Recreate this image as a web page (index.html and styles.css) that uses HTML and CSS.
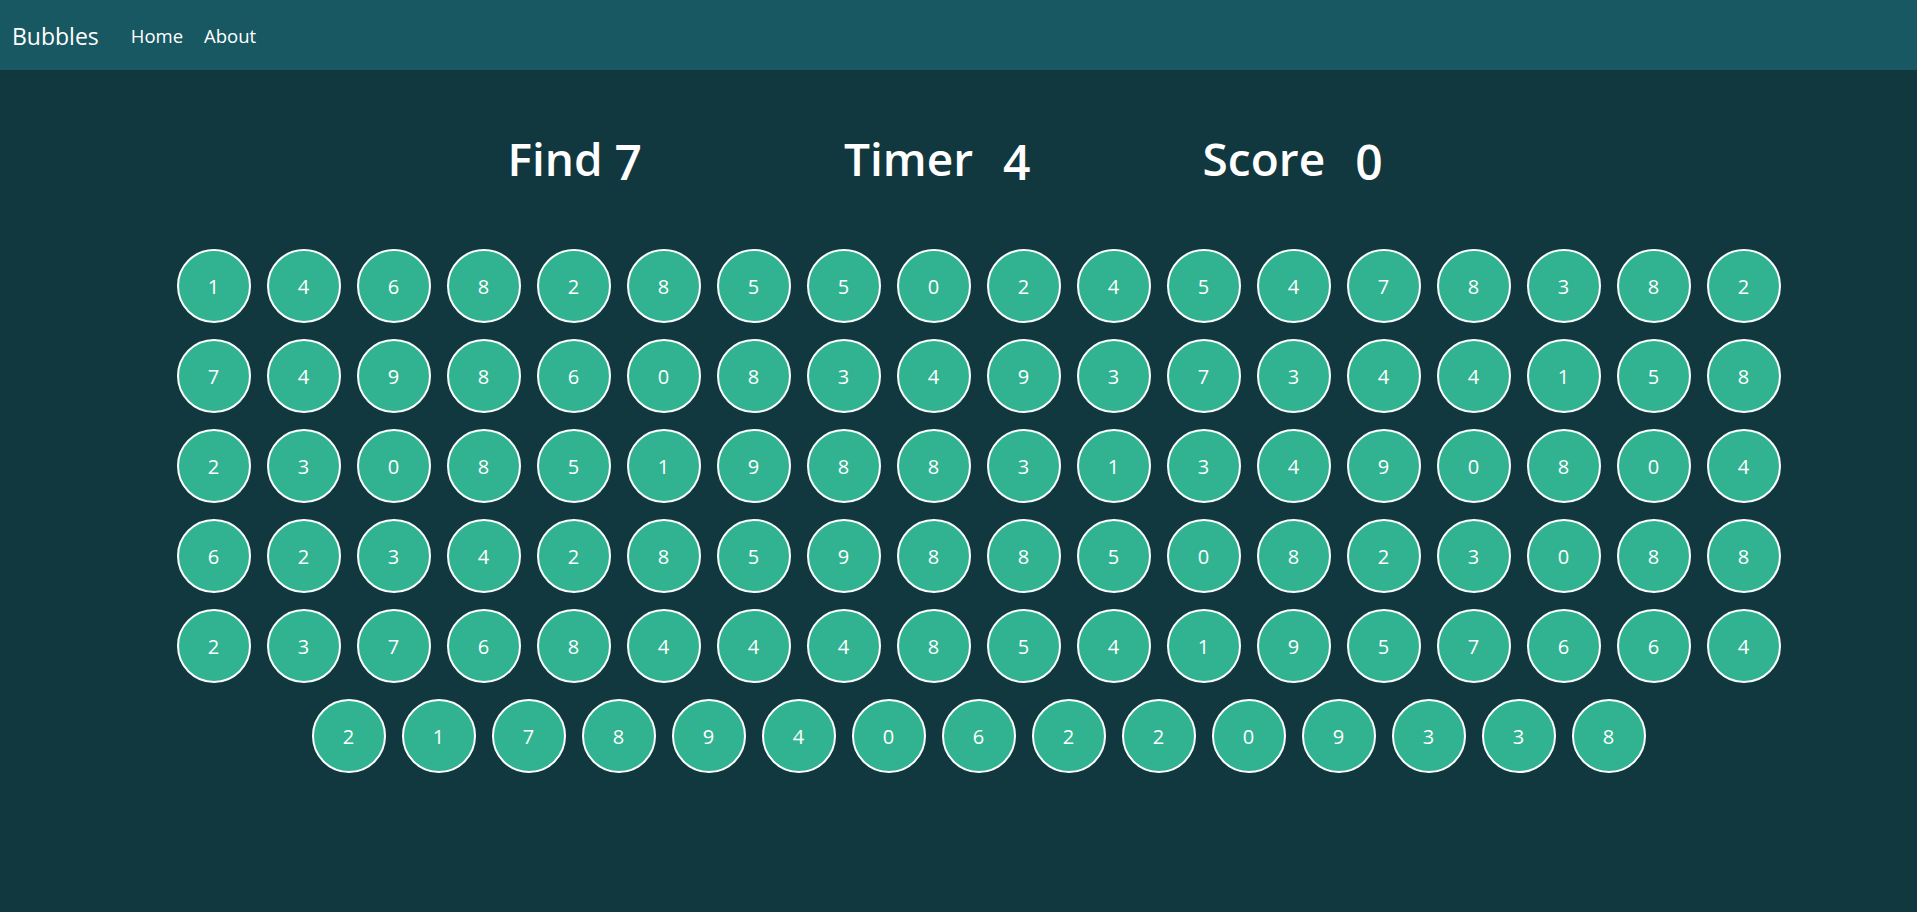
FILE: index.html
```html
<!DOCTYPE html>
<html lang="en">
<head>
    <meta charset="UTF-8">
    <meta name="viewport" content="width=device-width, initial-scale=1.0">
    <title>Bubbles</title>
    <link rel="stylesheet" href="styles.css">
</head>
<body>
    <nav class="navbar">
        <a class="brand" href="#">Bubbles</a>
        <a class="nav-link" href="#">Home</a>
        <a class="nav-link" href="#">About</a>
    </nav>

    <div class="stats">
        <div class="stat stat-find">
            <span class="stat-label">Find</span>
            <span class="stat-value value-find" id="find">7</span>
        </div>
        <div class="stat stat-timer">
            <span class="stat-label">Timer</span>
            <span class="stat-value" id="timer">4</span>
        </div>
        <div class="stat stat-score">
            <span class="stat-label">Score</span>
            <span class="stat-value" id="score">0</span>
        </div>
    </div>

    <div class="board" id="board"></div>

    <script>
        // bolhas da partida atual
        const numeros = '146828550245478382' +
                        '749860834937344158' +
                        '230851988313490804' +
                        '623428598850823088' +
                        '237684448541957664' +
                        '217894062209338';

        const board = document.getElementById('board');
        for (const n of numeros) {
            const bolha = document.createElement('div');
            bolha.className = 'bubble';
            bolha.textContent = n;
            board.appendChild(bolha);
        }
    </script>
</body>
</html>
```

FILE: styles.css
```css
body {
    margin: 0;
    padding: 0;
    background-color: #11383f;
    font-family: "Open Sans", "Noto Sans", sans-serif;
    color: #fff;
}

.navbar {
    display: flex;
    align-items: center;
    height: 70px;
    padding: 0 12px;
    background-color: #185862;
}

.navbar a {
    color: #fff;
    text-decoration: none;
}

.brand {
    font-size: 23px;
    margin-right: 32px;
    margin-top: 2px;
}

.nav-link {
    font-size: 18.5px;
    margin-right: 21px;
}

.stats {
    display: flex;
    justify-content: center;
    align-items: flex-start;
    margin-top: 57px;
    padding-right: 27px;
}

.stat {
    display: flex;
    align-items: flex-start;
    font-size: 46px;
    font-weight: 600;
    line-height: 62px;
}

.stat-find {
    margin-right: 202px;
}

.stat-timer {
    margin-right: 172px;
}

.stat-value {
    margin-top: 4px;
    margin-left: 30px;
    font-size: 48px;
}

.value-find {
    margin-left: 12px;
}

.board {
    display: flex;
    flex-wrap: wrap;
    justify-content: center;
    width: 1660px;
    margin: 48px auto 0;
    padding-left: 40px;
}

.bubble {
    display: flex;
    justify-content: center;
    align-items: center;
    width: 70px;
    height: 70px;
    margin: 8px;
    border: 2px solid #fff;
    border-radius: 50%;
    background-color: #31b391;
    font-size: 20px;
}
```
